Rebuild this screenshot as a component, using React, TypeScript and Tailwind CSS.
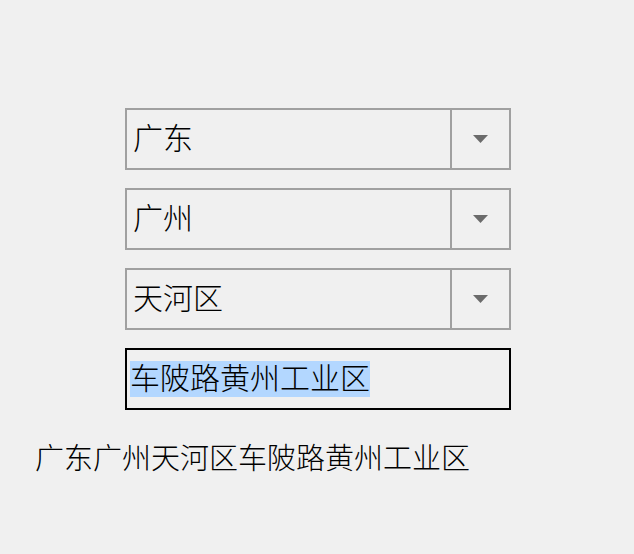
const font = { fontFamily: '"Noto Sans CJK SC", "Noto Sans", sans-serif' }

const Combo: React.FC<{ value: string }> = ({ value }) => (
  <div className="flex h-[62px] w-[386px] border-2 border-[#a0a0a0] bg-[#f0f0f0]">
    <div className="flex flex-1 items-center pb-[6px] pl-[6px] text-[30px] font-light text-black">
      {value}
    </div>
    <div className="flex w-[59px] items-center justify-center border-l-2 border-[#a0a0a0]">
      <svg width="15" height="8" viewBox="0 0 15 8">
        <path d="M0 0 H15 L7.5 8 Z" fill="#6b6b6b" />
      </svg>
    </div>
  </div>
)

export default function App() {
  return (
    <div
      className="h-[554px] w-[634px] bg-[#f0f0f0] pt-[108px]"
      style={font}
    >
      <div className="ml-[125px] flex w-[386px] flex-col gap-[18px]">
        <Combo value="广东" />
        <Combo value="广州" />
        <Combo value="天河区" />
        <div className="flex h-[62px] items-center border-2 border-black pl-[3px]">
          <span className="inline-block h-[36px] bg-[#b3d7ff] text-[30px] font-light leading-[30px] text-black">
            车陂路黄州工业区
          </span>
        </div>
      </div>
      <div className="ml-[35px] mt-[26px] h-[40px] text-[29px] font-light leading-[40px] text-black">
        广东广州天河区车陂路黄州工业区
      </div>
    </div>
  )
}
